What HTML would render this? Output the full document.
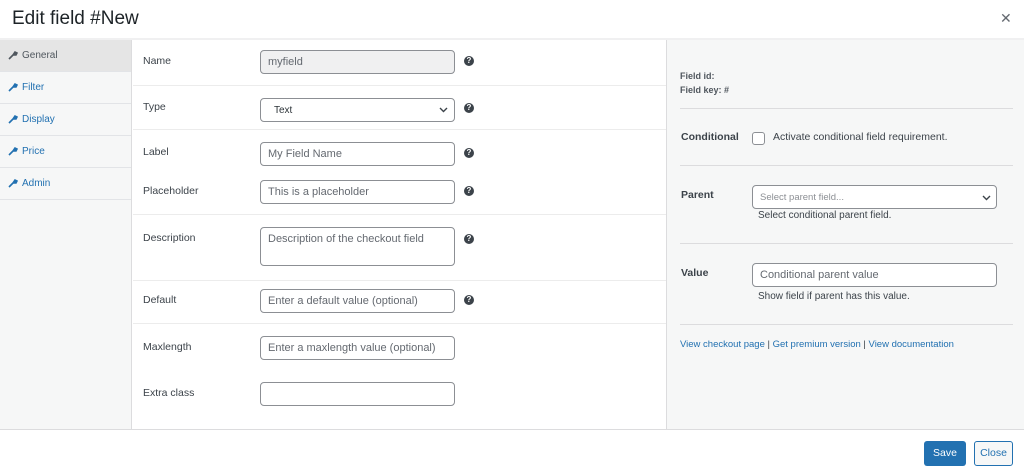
<!DOCTYPE html>
<html><head><style>
*{box-sizing:border-box;margin:0;padding:0}
body{width:1024px;height:472px;overflow:hidden;font-family:"Liberation Sans",sans-serif;background:#fff;color:#3c434a;position:relative;font-size:11px}
.abs{position:absolute}
h1{position:absolute;left:12px;top:8px;font-size:19px;font-weight:400;color:#1d2327}
.x{position:absolute;left:1000px;top:10px;font-size:14px;color:#646970}
.hdr{position:absolute;left:0;top:38px;width:1024px;height:2px;background:#f0f0f1}
.side{position:absolute;left:0;top:40px;width:132px;height:389px;background:#f6f7f7;border-right:1px solid #dcdcde}
.tab{height:32px;border-bottom:1px solid #e2e4e7;color:#2271b1;padding:10px 0 0 22px;position:relative;font-size:10px}
.tab.act{background:#e5e5e5;color:#50575e}
.tab svg{position:absolute;left:8px;top:10px}
.main{position:absolute;left:133px;top:40px;width:534px;height:389px;border-right:1px solid #dcdcde}
.sep{position:absolute;left:133px;width:533px;height:1px;background:#ececec}
.lbl{position:absolute;left:143px;font-size:10.5px;color:#3c434a}
.in{position:absolute;left:260px;width:195px;height:24px;border:1px solid #8c8f94;border-radius:4px;padding:5px 7px;font-size:11px;color:#646970;background:#fff}
.q{position:absolute;left:464px;width:10px;height:10px;border-radius:50%;background:#3c434a;color:#fff;font-size:8px;font-weight:bold;text-align:center;line-height:10px}
.right{position:absolute;left:667px;top:40px;width:357px;height:389px;background:#f6f7f7}
.rs{position:absolute;left:680px;width:333px;height:1px;background:#dcdcde}
.rl{position:absolute;left:681px;font-size:10.5px;font-weight:bold;color:#3c434a}
.foot{position:absolute;left:0;top:429px;width:1024px;height:1px;background:#dcdcde}
a{color:#2271b1;text-decoration:none}
</style></head><body>
<h1>Edit field #New</h1><div class="x">✕</div>
<div class="hdr"></div>
<div class="side">
<div class="tab act"><svg width="10" height="10" viewBox="0 0 10 10"><path d="M1 9L5 5M5 5L7 2L9 3L8 5L5 5Z" stroke="#50575e" stroke-width="1.6" fill="#50575e"/></svg>General</div>
<div class="tab"><svg width="10" height="10" viewBox="0 0 10 10"><path d="M1 9L5 5M5 5L7 2L9 3L8 5L5 5Z" stroke="#2271b1" stroke-width="1.6" fill="#2271b1"/></svg>Filter</div>
<div class="tab"><svg width="10" height="10" viewBox="0 0 10 10"><path d="M1 9L5 5M5 5L7 2L9 3L8 5L5 5Z" stroke="#2271b1" stroke-width="1.6" fill="#2271b1"/></svg>Display</div>
<div class="tab"><svg width="10" height="10" viewBox="0 0 10 10"><path d="M1 9L5 5M5 5L7 2L9 3L8 5L5 5Z" stroke="#2271b1" stroke-width="1.6" fill="#2271b1"/></svg>Price</div>
<div class="tab"><svg width="10" height="10" viewBox="0 0 10 10"><path d="M1 9L5 5M5 5L7 2L9 3L8 5L5 5Z" stroke="#2271b1" stroke-width="1.6" fill="#2271b1"/></svg>Admin</div>
</div>
<div class="main"></div>
<div class="sep" style="top:85px"></div><div class="sep" style="top:129px"></div><div class="sep" style="top:214px"></div><div class="sep" style="top:280px"></div><div class="sep" style="top:323px"></div>
<div class="lbl" style="top:55px">Name</div>
<div class="in" style="top:50px;background:#f0f0f1;color:#646970">myfield</div><div class="q" style="top:56px">?</div>
<div class="lbl" style="top:101px">Type</div>
<div class="in" style="top:98px;color:#2c3338;padding-left:13px;font-size:10px;padding-top:6px">Text<svg class="abs" style="left:178px;top:8px" width="9" height="6" viewBox="0 0 9 6"><path d="M1 1L4.5 4.5L8 1" stroke="#3c434a" stroke-width="1.4" fill="none"/></svg></div><div class="q" style="top:103px">?</div>
<div class="lbl" style="top:146px">Label</div>
<div class="in" style="top:142px">My Field Name</div><div class="q" style="top:148px">?</div>
<div class="lbl" style="top:185px">Placeholder</div>
<div class="in" style="top:180px">This is a placeholder</div><div class="q" style="top:186px">?</div>
<div class="lbl" style="top:232px">Description</div>
<div class="in" style="top:227px;height:39px">Description of the checkout field</div><div class="q" style="top:234px">?</div>
<div class="lbl" style="top:294px">Default</div>
<div class="in" style="top:289px">Enter a default value (optional)</div><div class="q" style="top:295px">?</div>
<div class="lbl" style="top:341px">Maxlength</div>
<div class="in" style="top:336px">Enter a maxlength value (optional)</div>
<div class="lbl" style="top:387px">Extra class</div>
<div class="in" style="top:382px"></div>
<div class="right"></div>
<div class="abs" style="left:680px;top:69px;font-size:9px;font-weight:bold;color:#50575e;line-height:14px">Field id:<br>Field key: #</div>
<div class="rs" style="top:108px"></div><div class="rs" style="top:165px"></div><div class="rs" style="top:243px"></div><div class="rs" style="top:324px"></div>
<div class="rl" style="top:131px">Conditional</div>
<div class="abs" style="left:752px;top:132px;width:13px;height:13px;border:1px solid #8c8f94;border-radius:3px;background:#fff"></div>
<div class="abs" style="left:773px;top:131px;font-size:10.5px">Activate conditional field requirement.</div>
<div class="rl" style="top:189px">Parent</div>
<div class="abs" style="left:752px;top:185px;width:245px;height:24px;border:1px solid #8c8f94;border-radius:4px;background:#fff;padding:6px 7px;font-size:9.5px;color:#8c8f94">Select parent field...<svg class="abs" style="left:229px;top:9px" width="9" height="6" viewBox="0 0 9 6"><path d="M1 1L4.5 4.5L8 1" stroke="#3c434a" stroke-width="1.4" fill="none"/></svg></div>
<div class="abs" style="left:758px;top:210px;font-size:10px">Select conditional parent field.</div>
<div class="rl" style="top:267px">Value</div>
<div class="abs" style="left:752px;top:263px;width:245px;height:24px;border:1px solid #8c8f94;border-radius:4px;background:#fff;padding:5px 7px;font-size:11px;color:#646970">Conditional parent value</div>
<div class="abs" style="left:758px;top:291px;font-size:10px">Show field if parent has this value.</div>
<div class="abs" style="left:680px;top:339px;font-size:9.5px;color:#3c434a"><a>View checkout page</a> | <a>Get premium version</a> | <a>View documentation</a></div>
<div class="foot"></div>
<div class="abs" style="left:924px;top:441px;width:42px;height:25px;background:#2271b1;border-radius:3px;color:#fff;font-size:10.5px;text-align:center;line-height:25px">Save</div>
<div class="abs" style="left:974px;top:441px;width:39px;height:25px;border:1px solid #2271b1;border-radius:3px;color:#2271b1;background:#f6f7f7;font-size:10.5px;text-align:center;line-height:23px">Close</div>
</body></html>
